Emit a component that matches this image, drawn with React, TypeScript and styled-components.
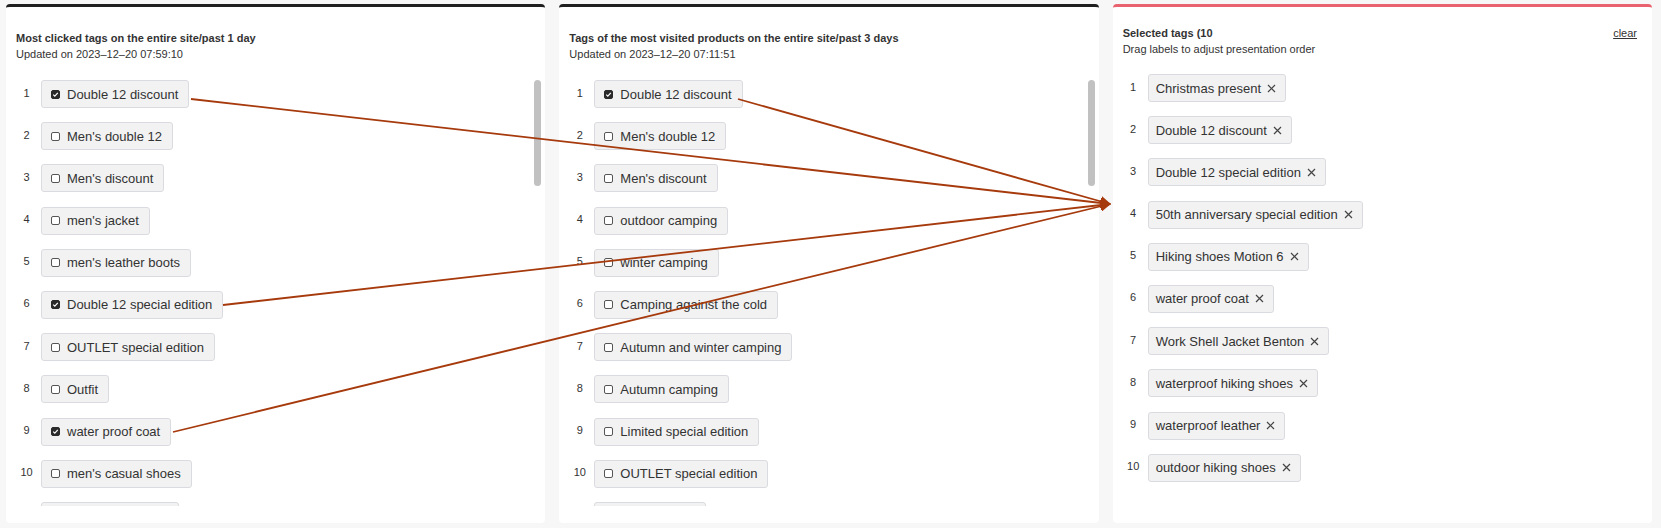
import styled, { createGlobalStyle } from "styled-components";

const GlobalStyle = createGlobalStyle`
  html, body {
    margin: 0;
    background: #f7f7f7;
    font-family: "Liberation Sans", Arial, sans-serif;
    color: #333;
  }
`;

const Page = styled.div`
  position: relative;
  box-sizing: border-box;
  width: 1661px;
  height: 528px;
  padding: 4px 9px 5px 6px;
  display: grid;
  grid-template-columns: repeat(3, 1fr);
  gap: 14px;
`;

const Card = styled.section<{ $accent: string }>`
  min-height: 0;
  display: flex;
  flex-direction: column;
  background: #fff;
  border-top: 3px solid ${(p) => p.$accent};
  border-radius: 4px;
  padding: 0 4px 17px 10px;
  overflow: hidden;
`;

const Header = styled.header<{ $top: number; $bottom: number }>`
  display: flex;
  justify-content: space-between;
  align-items: flex-start;
  padding: ${(p) => p.$top}px 11px ${(p) => p.$bottom}px 0;
  font-size: 11px;
  line-height: 16px;
`;

const Title = styled.h2`
  margin: 0;
  font-size: 11px;
  font-weight: 700;
  line-height: 16px;
`;

const Sub = styled.div`
  font-size: 11px;
`;

const ClearLink = styled.a`
  color: #333;
  text-decoration: underline;
  cursor: pointer;
`;

const ScrollArea = styled.div`
  position: relative;
  flex: 1;
  min-height: 0;
`;

const List = styled.ol`
  list-style: none;
  margin: 0;
  padding: 0;
  height: 100%;
  overflow-y: auto;
  scrollbar-width: none;
`;

const Thumb = styled.div`
  position: absolute;
  top: 0;
  right: 0;
  width: 7px;
  height: 106px;
  border-radius: 4px;
  background: #c1c1c1;
`;

const Row = styled.li`
  display: flex;
  align-items: center;
  gap: 4px;
  height: 28px;

  & + & {
    margin-top: 14.2px;
  }
`;

const Index = styled.span`
  flex-shrink: 0;
  width: 21px;
  text-align: center;
  font-size: 11px;
  margin-top: -3px;
`;

const Tag = styled.span<{ $removable?: boolean }>`
  display: inline-flex;
  align-items: center;
  box-sizing: border-box;
  height: 28px;
  padding: ${(p) => (p.$removable ? "0 9px 0 7px" : "0 10px 0 9px")};
  gap: ${(p) => (p.$removable ? "6px" : "7px")};
  background: #f2f2f2;
  border: 1px solid #dadbe0;
  border-radius: 3px;
  font-size: 13px;
  white-space: nowrap;
  color: #333;
`;

const Box = styled.span<{ $checked: boolean }>`
  flex-shrink: 0;
  display: inline-flex;
  align-items: center;
  justify-content: center;
  box-sizing: border-box;
  width: 9px;
  height: 9px;
  border: 1px solid ${(p) => (p.$checked ? "#2b2b2b" : "#555")};
  border-radius: 2px;
  background: ${(p) => (p.$checked ? "#2b2b2b" : "#fff")};
`;

const Overlay = styled.svg`
  position: absolute;
  left: 0;
  top: 0;
  pointer-events: none;
`;

type Item = { label: string; checked?: boolean };

const clicked: Item[] = [
  { label: "Double 12 discount", checked: true },
  { label: "Men's double 12" },
  { label: "Men's discount" },
  { label: "men's jacket" },
  { label: "men's leather boots" },
  { label: "Double 12 special edition", checked: true },
  { label: "OUTLET special edition" },
  { label: "Outfit" },
  { label: "water proof coat", checked: true },
  { label: "men's casual shoes" },
  { label: "men's winter coat" },
];

const visited: Item[] = [
  { label: "Double 12 discount", checked: true },
  { label: "Men's double 12" },
  { label: "Men's discount" },
  { label: "outdoor camping" },
  { label: "winter camping" },
  { label: "Camping against the cold" },
  { label: "Autumn and winter camping" },
  { label: "Autumn camping" },
  { label: "Limited special edition" },
  { label: "OUTLET special edition" },
  { label: "camping tent" },
];

const selected = [
  "Christmas present",
  "Double 12 discount",
  "Double 12 special edition",
  "50th anniversary special edition",
  "Hiking shoes Motion 6",
  "water proof coat",
  "Work Shell Jacket Benton",
  "waterproof hiking shoes",
  "waterproof leather",
  "outdoor hiking shoes",
];

function Check({ checked }: { checked: boolean }) {
  return (
    <Box $checked={checked}>
      {checked && (
        <svg width="7" height="7" viewBox="0 0 7 7">
          <path d="M1.2 3.6 L2.8 5.1 L5.8 1.8" fill="none" stroke="#fff" strokeWidth="1.2" />
        </svg>
      )}
    </Box>
  );
}

function Close() {
  return (
    <svg width="9" height="9" viewBox="0 0 9 9">
      <path d="M1 1 L8 8 M8 1 L1 8" stroke="#444" strokeWidth="1.2" />
    </svg>
  );
}

function TagList({ items }: { items: Item[] }) {
  return (
    <ScrollArea>
      <List>
        {items.map((it, i) => (
          <Row key={i}>
            <Index>{i + 1}</Index>
            <Tag>
              <Check checked={!!it.checked} />
              {it.label}
            </Tag>
          </Row>
        ))}
      </List>
      <Thumb />
    </ScrollArea>
  );
}

// arrows drawn over the page, from checked tags to the selected list
const arrows = [
  [191, 99],
  [223, 305],
  [173, 432],
  [738, 99],
];
const tip = [1110, 204];

export default function App() {
  return (
    <>
      <GlobalStyle />
      <Page>
        <Card $accent="#1f1f1f">
          <Header $top={23} $bottom={18}>
            <div>
              <Title>Most clicked tags on the entire site/past 1 day</Title>
              <Sub>Updated on 2023–12–20 07:59:10</Sub>
            </div>
          </Header>
          <TagList items={clicked} />
        </Card>

        <Card $accent="#1f1f1f">
          <Header $top={23} $bottom={18}>
            <div>
              <Title>Tags of the most visited products on the entire site/past 3 days</Title>
              <Sub>Updated on 2023–12–20 07:11:51</Sub>
            </div>
          </Header>
          <TagList items={visited} />
        </Card>

        <Card $accent="#e8636f">
          <Header $top={18} $bottom={17}>
            <div>
              <Title>Selected tags (10</Title>
              <Sub>Drag labels to adjust presentation order</Sub>
            </div>
            <ClearLink>clear</ClearLink>
          </Header>
          <ScrollArea>
            <List>
              {selected.map((label, i) => (
                <Row key={label}>
                  <Index>{i + 1}</Index>
                  <Tag $removable>
                    {label}
                    <Close />
                  </Tag>
                </Row>
              ))}
            </List>
          </ScrollArea>
        </Card>

        <Overlay width="1661" height="528" viewBox="0 0 1661 528">
          <defs>
            <marker
              id="head"
              viewBox="0 0 10 10"
              refX="9"
              refY="5"
              markerWidth="6"
              markerHeight="6"
              orient="auto"
            >
              <path d="M0 0 L10 5 L0 10 z" fill="#a63a0c" />
            </marker>
          </defs>
          {arrows.map(([x, y], i) => (
            <line
              key={i}
              x1={x}
              y1={y}
              x2={tip[0]}
              y2={tip[1]}
              stroke="#a63a0c"
              strokeWidth="1.8"
              markerEnd="url(#head)"
            />
          ))}
        </Overlay>
      </Page>
    </>
  );
}
